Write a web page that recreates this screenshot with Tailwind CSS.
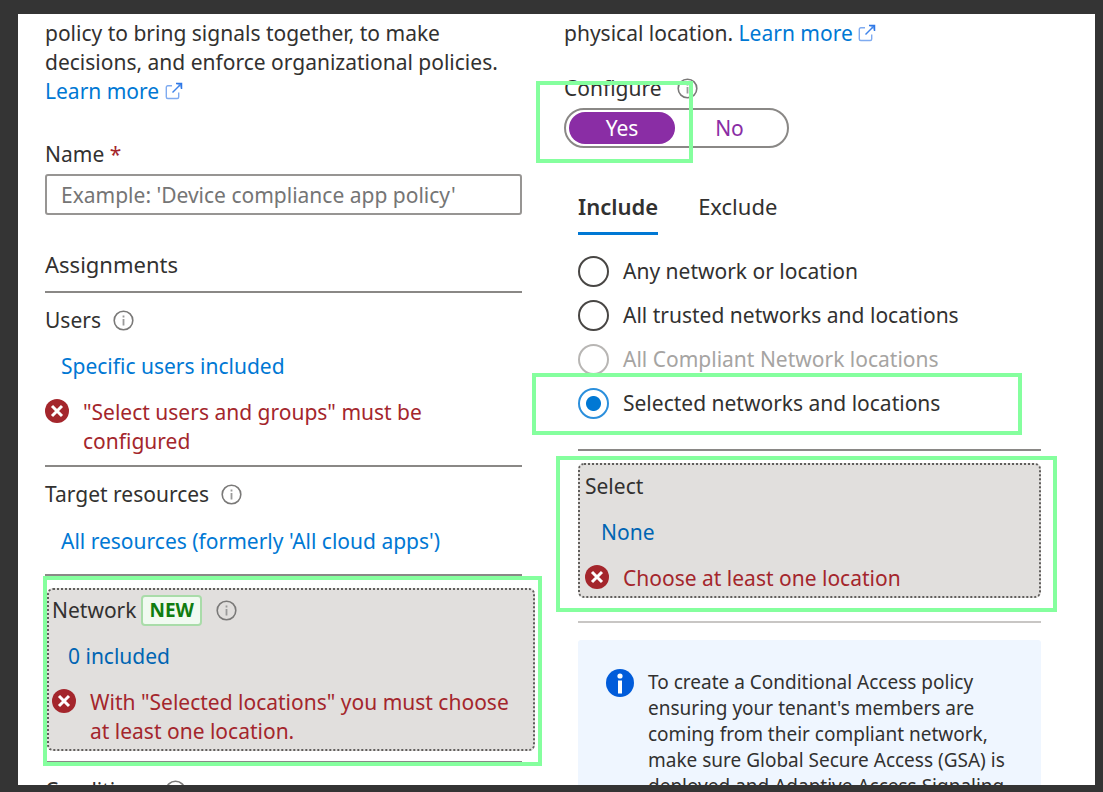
<!DOCTYPE html>
<html lang="en">
<head>
<meta charset="utf-8">
<meta name="viewport" content="width=device-width, initial-scale=1">
<title>Conditional Access policy</title>
<script src="https://cdn.jsdelivr.net/npm/@tailwindcss/browser@4"></script>
</head>
<body class="h-screen overflow-hidden bg-[#343434] pt-[14px] pr-2 pb-[7px] pl-[18px] font-['Noto_Sans','Open_Sans',sans-serif] text-[21px] leading-[29px] text-[#323130]">
<svg class="hidden" aria-hidden="true">
  <symbol id="info" viewBox="0 0 21 21"><circle cx="10.5" cy="10.5" r="9.3" fill="none" stroke="#7a7978" stroke-width="1.6"/><path d="M10.5 9v6.5M10.5 5.5v2" fill="none" stroke="#9a9a9a" stroke-width="1.8"/></symbol>
  <symbol id="external" viewBox="0 0 18 18"><path d="M7 3.8H2.8a1.5 1.5 0 0 0-1.5 1.5v9.7a1.5 1.5 0 0 0 1.5 1.5h9.4a1.5 1.5 0 0 0 1.5-1.5V10.5" fill="none" stroke="#7fabf0" stroke-width="1.4"/><path d="M7.5 10.5 16 2" fill="none" stroke="#3f83ea" stroke-width="1.5"/><path d="M11 1h6v6z" fill="#3f83ea" fill-opacity=".55"/><path d="M11 1.5h5.5V7" fill="none" stroke="#2f78e6" stroke-width="1.5"/></symbol>
  <symbol id="error" viewBox="0 0 24 24"><circle cx="12" cy="12" r="12" fill="#a4262c"/><path d="m7 7 10 10M17 7 7 17" stroke="#fff" stroke-width="3"/></symbol>
</svg>
<main class="grid h-full grid-cols-[518px_1fr] overflow-hidden bg-white">
  <section class="pt-[5px] pl-[27px]">
    <div class="mr-[14px]">
      <p>policy to bring signals together, to make<br>decisions, and enforce organizational policies.<br><a href="#" class="text-[#0078d4]">Learn more <svg class="inline size-[18px] align-[-1px]"><use href="#external"/></svg></a></p>
      <label for="name" class="mt-[34px] block">Name <span class="text-[#a4262c]">*</span></label>
      <input id="name" type="text" placeholder="Example: 'Device compliance app policy'" class="mt-[5px] block h-[41px] w-full rounded-[3px] border-2 border-[#979593] px-[14px] placeholder:text-[#757575]">
      <h2 class="mt-[35px] border-b-2 border-[#8a8886] pb-3 text-[22px]">Assignments</h2>
      <div class="border-b-2 border-[#8a8886] pt-[13px] pb-[9px]">
        <div class="flex items-center gap-3">Users <svg class="size-[21px]"><use href="#info"/></svg></div>
        <a href="#" class="mt-[17px] ml-4 block text-[#0078d4]">Specific users included</a>
        <div class="mt-[17px] flex gap-[14px] text-[#a4262c]"><svg class="mt-[1px] size-6 shrink-0"><use href="#error"/></svg><p>"Select users and groups" must be<br>configured</p></div>
      </div>
      <div class="border-b-2 border-[#8a8886] pt-[13px] pb-[18px]">
        <div class="flex items-center gap-3">Target resources <svg class="size-[21px]"><use href="#info"/></svg></div>
        <a href="#" class="mt-[18px] ml-4 block text-[#0078d4]">All resources (formerly 'All cloud apps')</a>
      </div>
    </div>
    <div class="relative mt-3 mr-[1px] ml-[2px] h-[163px] rounded-md border-2 border-dotted border-[#605e5c] bg-[#e1dfdd] pt-[5px] pr-2 pl-[3px]">
      <div class="flex items-center">Network <span class="ml-[5px] rounded-[4px] border-2 border-[#a9dca9] bg-[#f1faf1] px-[6px] text-[19px] leading-[27px] font-bold text-[#107c10]">NEW</span><svg class="ml-[14px] size-[21px]"><use href="#info"/></svg></div>
      <a href="#" class="mt-[16px] ml-4 block text-[#0065b3]">0 included</a>
      <div class="mt-[17px] flex gap-[14px] text-[#a4262c]"><svg class="mt-[1px] size-6 shrink-0"><use href="#error"/></svg><p class="whitespace-nowrap">With "Selected locations" you must choose<br>at least one location.</p></div>
      <div class="pointer-events-none absolute -top-[14px] -right-[9px] -bottom-[17px] -left-[6px] border-4 border-[#85ff9e]"></div>
    </div>
    <div class="mt-[10px] mr-[14px] border-t-2 border-[#8a8886] pt-[13px]">
      <div class="flex items-center gap-[14px]">Conditions <svg class="size-[21px]"><use href="#info"/></svg></div>
    </div>
  </section>
  <section class="pt-[5px] pr-[54px] pl-[28px]">
    <p>physical location. <a href="#" class="text-[#0078d4]">Learn more <svg class="inline size-[18px] align-[-1px]"><use href="#external"/></svg></a></p>
    <div class="relative mt-[26px] w-[225px]">
      <div class="flex items-center gap-[15px]">Configure <svg class="size-[21px]"><use href="#info"/></svg></div>
      <div class="mt-[5px] flex h-10 items-center rounded-full border-2 border-[#8a8886] p-[3px]">
        <button type="button" class="h-8 w-[106px] rounded-full bg-[#8a2da5] text-white">Yes</button>
        <button type="button" class="h-8 flex-1 rounded-full text-[#8a2da5]">No</button>
      </div>
      <div class="pointer-events-none absolute top-[7px] right-[96px] -bottom-[15px] -left-7 border-4 border-[#85ff9e]"></div>
    </div>
    <div class="ml-[14px]">
      <div class="mt-11 flex gap-10 text-[22px]" role="tablist">
        <button type="button" role="tab" aria-selected="true" class="border-b-3 border-[#0078d4] pb-[11px] font-semibold">Include</button>
        <button type="button" role="tab" class="border-b-3 border-transparent pb-[11px]">Exclude</button>
      </div>
      <div class="mt-[21px] flex flex-col gap-[13px]">
        <label class="flex items-center gap-[14px]"><input type="radio" name="loc" class="size-[31px] appearance-none rounded-full border-2 border-[#484644]">Any network or location</label>
        <label class="flex items-center gap-[14px]"><input type="radio" name="loc" class="size-[31px] appearance-none rounded-full border-2 border-[#484644]">All trusted networks and locations</label>
        <label class="flex items-center gap-[14px] text-[#a6a4a2]"><input type="radio" name="loc" disabled class="size-[31px] appearance-none rounded-full border-2 border-[#b8b6b4]">All Compliant Network locations</label>
        <div class="relative">
          <label class="flex items-center gap-[14px]"><input type="radio" name="loc" checked class="size-[31px] appearance-none rounded-full border-2 border-[#2b8fdc] bg-[radial-gradient(circle,#0078d4_7px,transparent_8px)]">Selected networks and locations</label>
          <div class="pointer-events-none absolute -top-[15px] right-[19px] -bottom-4 -left-[46px] border-4 border-[#85ff9e]"></div>
        </div>
      </div>
      <div class="relative mt-[30px] border-t-2 border-[#8a8886] pt-3">
        <div class="h-[135px] rounded-md border-2 border-dotted border-[#605e5c] bg-[#e1dfdd] px-[5px] pt-[7px]">
          <div>Select</div>
          <a href="#" class="mt-[17px] ml-4 block text-[#0065b3]">None</a>
          <div class="mt-[17px] flex gap-[14px] text-[#a4262c]"><svg class="mt-[1px] size-6 shrink-0"><use href="#error"/></svg><p>Choose at least one location</p></div>
        </div>
        <div class="pointer-events-none absolute top-[5px] -right-[16px] -bottom-[14px] -left-[22px] border-4 border-[#85ff9e]"></div>
      </div>
      <hr class="mt-[23px] border-t-2 border-[#c8c6c4]">
      <aside class="mt-[17px] flex gap-[14px] rounded-[3px] bg-[#eff6ff] pt-[29px] pr-4 pb-8 pl-7 text-[19px] leading-[26px]">
        <svg class="size-7 shrink-0" viewBox="0 0 28 28"><circle cx="14" cy="14" r="14" fill="#015cda"/><circle cx="14" cy="7" r="2.6" fill="#fff"/><path d="M14 11.5V24.5" stroke="#fff" stroke-width="4"/></svg>
        <p>To create a Conditional Access policy<br>ensuring your tenant's members are<br>coming from their compliant network,<br>make sure Global Secure Access (GSA) is<br>deployed and Adaptive Access Signaling</p>
      </aside>
    </div>
  </section>
</main>
</body>
</html>
